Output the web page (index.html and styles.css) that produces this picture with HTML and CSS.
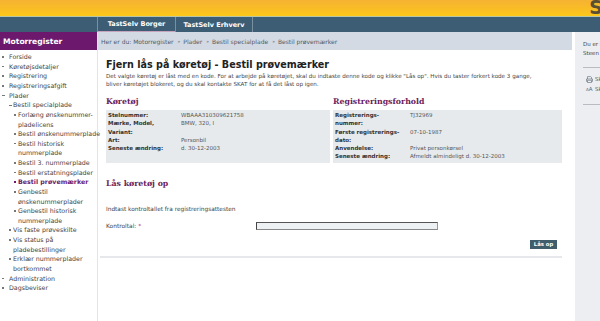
FILE: index.html
```html
<!DOCTYPE html>
<html lang="da">
<head>
<meta charset="utf-8">
<title>Motorregister</title>
<link rel="stylesheet" href="styles.css">
</head>
<body>
<header class="topbar">
  <span class="logo">S</span>
</header>
<nav class="tabbar">
  <div class="tabs">
    <a class="tab active">TastSelv Borger</a>
    <a class="tab">TastSelv Erhverv</a>
  </div>
</nav>
<div class="layout">
  <aside class="leftcol">
    <div class="sectionhead">Motorregister</div>
    <ul class="nav">
      <li class="l1">Forside</li>
      <li class="l1">Køretøjsdetaljer</li>
      <li class="l1">Registrering</li>
      <li class="l1">Registreringsafgift</li>
      <li class="l1 open">Plader</li>
      <li class="l2 open">Bestil specialplade</li>
      <li class="l3">Forlæng ønskenummer-<br>pladelicens</li>
      <li class="l3">Bestil ønskenummerplade</li>
      <li class="l3">Bestil historisk<br>nummerplade</li>
      <li class="l3">Bestil 3. nummerplade</li>
      <li class="l3">Bestil erstatningsplader</li>
      <li class="l3 current">Bestil prøvemærker</li>
      <li class="l3">Genbestil<br>ønskenummerplader</li>
      <li class="l3">Genbestil historisk<br>nummerplade</li>
      <li class="l2">Vis faste prøveskilte</li>
      <li class="l2">Vis status på<br>pladebestillinger</li>
      <li class="l2">Erklær nummerplader<br>bortkommet</li>
      <li class="l1">Administration</li>
      <li class="l1">Dagsbeviser</li>
    </ul>
  </aside>
  <main class="center">
    <div class="breadcrumb"><span>Her er du: Motorregister</span><span class="sep">»</span><span>Plader</span><span class="sep">»</span><span>Bestil specialplade</span><span class="sep">»</span><span>Bestil prøvemærker</span></div>
    <div class="content">
      <h1>Fjern lås på køretøj - Bestil prøvemærker</h1>
      <p class="intro">Det valgte køretøj er låst med en kode. For at arbejde på køretøjet, skal du indtaste denne kode og klikke "Lås op". Hvis du taster forkert kode 3 gange,<br>bliver køretøjet blokeret, og du skal kontakte SKAT for at få det låst op igen.</p>
      <div class="infogrid">
        <section class="info">
          <h2>Køretøj</h2>
          <dl class="datatable left">
            <dt>Stelnummer:</dt><dd>WBAAA310309621758</dd>
            <dt>Mærke, Model,<br>Variant:</dt><dd>BMW, 320, I</dd>
            <dt>Art:</dt><dd>Personbil</dd>
            <dt>Seneste ændring:</dt><dd>d. 30-12-2003</dd>
          </dl>
        </section>
        <section class="info">
          <h2>Registreringsforhold</h2>
          <dl class="datatable right">
            <dt>Registrerings-<br>nummer:</dt><dd>TJ32969</dd>
            <dt>Første registrerings-<br>dato:</dt><dd>07-10-1987</dd>
            <dt>Anvendelse:</dt><dd>Privat personkørsel</dd>
            <dt>Seneste ændring:</dt><dd>Afmeldt almindeligt d. 30-12-2003</dd>
          </dl>
        </section>
      </div>
      <section class="unlock">
        <h2>Lås køretøj op</h2>
        <p class="hint">Indtast kontroltallet fra registreringsattesten</p>
        <div class="formrow">
          <label class="flabel">Kontroltal: <span class="req">*</span></label>
          <input class="field" type="text">
        </div>
        <div class="actions"><button class="btn">Lås op</button></div>
      </section>
    </div>
  </main>
  <aside class="rightcol">
    <div class="user">Du er logget ind som<br>Steen</div>
    <div class="tools">
      <div class="tool"><svg class="ico" width="7" height="7" viewBox="0 0 7 7"><path d="M1.5 3V0.6h3.2l0.8 0.8V3M0.5 3h6v2.4h-1M0.5 3v2.4h1M1.5 4.3h4v2.2h-4z" fill="none" stroke="#5d6874" stroke-width="0.6"/></svg><span>Skriv ud</span></div>
      <div class="tool"><span class="aa"><small>A</small>A</span><span>Skriftstørrelse</span></div>
    </div>
  </aside>
</div>
</body>
</html>
```

FILE: styles.css
```css
* { box-sizing: border-box; }
html, body { margin: 0; padding: 0; }
body {
  width: 600px;
  height: 321px;
  overflow: hidden;
  font-family: "DejaVu Sans", Verdana, sans-serif;
  color: #333;
  background: #fff;
}
.topbar {
  height: 16px;
  background: linear-gradient(to bottom, #f6b232 0%, #f9bd25 55%, #fdc91a 100%);
  position: relative;
  overflow: hidden;
}
.logo {
  position: absolute;
  right: -3px;
  top: -4px;
  font: bold 19px "DejaVu Sans", sans-serif;
  color: #5b5032;
}
.tabbar {
  height: 16px;
  background: #3c5d73;
  border-top: 1px solid #b9c6a8;
}
.tabs { display: flex; height: 100%; padding-left: 97px; }
.tab {
  display: flex;
  align-items: center;
  justify-content: center;
  width: 78px;
  height: 100%;
  color: #fff;
  font-weight: bold;
  font-size: 6.5px;
  border-left: 1px solid #7890a0;
}
.tab + .tab { border-right: 1px solid #7890a0; }
.tab.active { border-bottom: 1px solid #c9a4bf; }
.layout { display: flex; height: 289px; }
.leftcol {
  width: 98px;
  flex: none;
  border-right: 1px solid #e2e4e8;
}
.sectionhead {
  height: 18px;
  background: #6c196d;
  color: #fff;
  font-weight: bold;
  font-size: 7.6px;
  padding-left: 3px;
  display: flex;
  align-items: center;
}
.nav { list-style: none; margin: 0; padding: 2.2px 0 0; font-size: 6.3px; color: #444; }
.nav li { line-height: 9.63px; position: relative; white-space: nowrap; }
.nav li::before {
  content: "";
  position: absolute;
  top: 4px;
  width: 1.6px;
  height: 1.6px;
  background: #777;
}
.nav li.open::before { width: 2.6px; height: 1px; top: 4.4px; }
.nav .l1 { padding-left: 9px; }
.nav .l1::before { left: 2px; }
.nav .l2 { padding-left: 13px; }
.nav .l2::before { left: 9px; }
.nav .l3 { padding-left: 18px; }
.nav .l3::before { left: 14px; }
.nav li.current { color: #6c1a6e; font-weight: bold; }
.nav li.current::before { background: #6c1a6e; }
.center { flex: 1; min-width: 0; }
.breadcrumb {
  height: 18px;
  background: #d4dae3;
  font-size: 6px;
  color: #4e5a6a;
  padding-left: 3px;
  display: flex;
  align-items: center;
  gap: 3px;
  margin-right: 3px;
  white-space: nowrap;
}
.sep { font-size: 4.5px; margin-left: 1px; }
.content { padding: 8px 13px 0 8px; }
h1 {
  margin: 0;
  font-size: 9.6px;
  font-weight: bold;
  color: #222;
  line-height: 14px;
}
.intro {
  margin: 0;
  font-size: 5.6px;
  line-height: 8px;
  color: #444;
  white-space: nowrap;
}
.infogrid {
  display: grid;
  grid-template-columns: 224px 229px;
  column-gap: 3px;
  margin-top: 8px;
}
.info { display: flex; flex-direction: column; }
h2 {
  margin: 0;
  font-family: "DejaVu Serif", Georgia, serif;
  font-weight: bold;
  font-size: 7.8px;
  color: #6a1d5e;
  line-height: 12px;
}
.datatable {
  flex: 1;
  margin: 2px 0 0;
  background: #e6eaed;
  display: grid;
  grid-template-columns: 73px 1fr;
  align-content: start;
  padding: 1px 2px 2px;
  font-size: 5.5px;
  line-height: 8.3px;
}
.datatable.right { grid-template-columns: 75px 1fr; }
.datatable dt { font-weight: bold; color: #333; white-space: nowrap; }
.datatable dd { margin: 0; color: #555; white-space: nowrap; }
.unlock {
  margin-top: 15px;
  border-bottom: 2px solid #e6e8ec;
  padding-bottom: 7px;
  margin-left: -6px;
  padding-left: 6px;
}
.hint { margin: 15px 0 0; font-size: 5.8px; line-height: 8px; color: #444; }
.formrow { display: flex; align-items: center; margin-top: 9px; }
.flabel { width: 150px; font-size: 5.9px; color: #444; }
.req { color: #a0206a; }
.field {
  width: 182px;
  height: 8px;
  padding: 0;
  background: #eef1f4;
  border: 1px solid #777;
  border-top-color: #555;
  border-left-color: #444;
  border-right-color: #999;
  border-bottom-color: #888;
}
.actions { display: flex; justify-content: flex-end; margin-top: 10px; padding-right: 5px; }
.btn {
  font-family: "DejaVu Sans", sans-serif;
  font-size: 5.3px;
  font-weight: bold;
  color: #fff;
  background: #3f5d6b;
  border: 0;
  padding: 0 3px;
  height: 9px;
  line-height: 9px;
  width: 27px;
}
.rightcol {
  width: 25px;
  flex: none;
  background: #eceef2;
  padding-left: 8px;
  overflow: hidden;
  font-size: 5.5px;
  color: #444;
  white-space: nowrap;
}
.user { padding-top: 7.5px; line-height: 9px; padding-bottom: 9.5px; border-bottom: 1px solid #b8bcc2; }
.tools { padding: 6px 0 10px 3px; border-bottom: 1px solid #b8bcc2; }
.tool { display: flex; align-items: center; gap: 2px; height: 10px; color: #555; }
.ico { flex: none; }
.aa { font-size: 5.5px; color: #5d6874; flex: none; width: 7px; }
.aa small { font-size: 4px; }
```
